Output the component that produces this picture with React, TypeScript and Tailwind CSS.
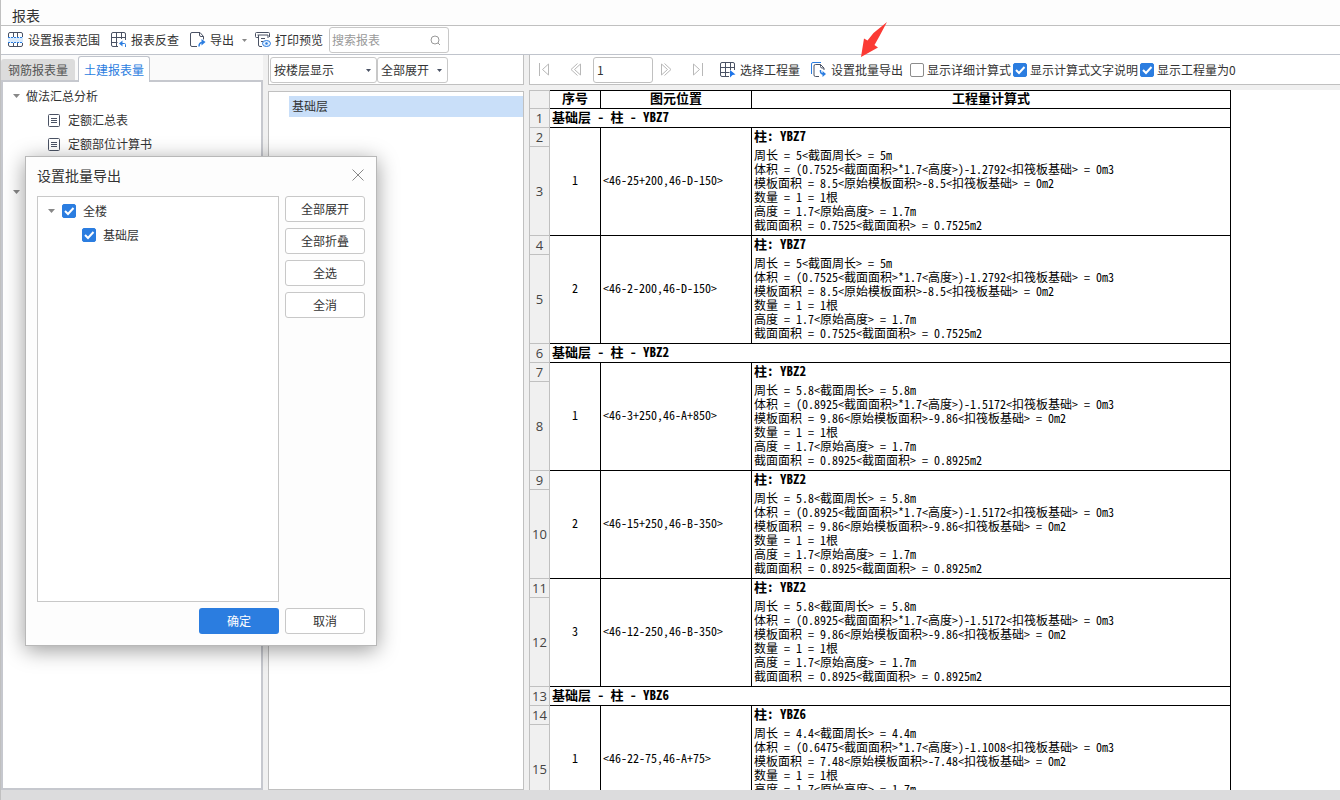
import { useState } from 'react'
import type { ReactNode } from 'react'

type Item = { seq: number; name: string; pos: string; lines: string[] }
type Group = { title: string; items: Item[] }

function makeItem(seq: number, name: string, pos: string, zc: string, a: string, v: string, mb: string): Item {
  return {
    seq,
    name,
    pos,
    lines: [
      `周长 = ${zc}<截面周长> = ${zc}m`,
      `体积 = (${a}<截面面积>*1.7<高度>)-${v}<扣筏板基础> = 0m3`,
      `模板面积 = ${mb}<原始模板面积>-${mb}<扣筏板基础> = 0m2`,
      '数量 = 1 = 1根',
      '高度 = 1.7<原始高度> = 1.7m',
      `截面面积 = ${a}<截面面积> = ${a}m2`,
    ],
  }
}

const groups: Group[] = [
  {
    title: '基础层 - 柱 - YBZ7',
    items: [
      makeItem(1, 'YBZ7', '<46-25+200,46-D-150>', '5', '0.7525', '1.2792', '8.5'),
      makeItem(2, 'YBZ7', '<46-2-200,46-D-150>', '5', '0.7525', '1.2792', '8.5'),
    ],
  },
  {
    title: '基础层 - 柱 - YBZ2',
    items: [
      makeItem(1, 'YBZ2', '<46-3+250,46-A+850>', '5.8', '0.8925', '1.5172', '9.86'),
      makeItem(2, 'YBZ2', '<46-15+250,46-B-350>', '5.8', '0.8925', '1.5172', '9.86'),
      makeItem(3, 'YBZ2', '<46-12-250,46-B-350>', '5.8', '0.8925', '1.5172', '9.86'),
    ],
  },
  {
    title: '基础层 - 柱 - YBZ6',
    items: [makeItem(1, 'YBZ6', '<46-22-75,46-A+75>', '4.4', '0.6475', '1.1008', '7.48')],
  },
]

function Caret({ className = 'text-[#888]' }: { className?: string }) {
  return (
    <svg width="7" height="4" viewBox="0 0 7 4" className={className}>
      <path d="M0 0h7L3.5 4z" fill="currentColor" />
    </svg>
  )
}

function Icon({ children }: { children: ReactNode }) {
  return (
    <svg width="16" height="16" viewBox="0 0 16 16" fill="none" stroke="#4a5264" className="shrink-0">
      {children}
    </svg>
  )
}

function RangeIcon() {
  return (
    <Icon>
      <rect x="0" y="5" width="15" height="6" fill="#d9ebfd" stroke="none" />
      <path d="M.5 5V2Q.5.5 2 .5h11q1.5 0 1.5 1.5v3M.5 11v2q0 1.500 1.500 1.500h11q1.500 0 1.500-1.500v-2M5.500.5V5M9.500.5V5M5.500 11v3.500M9.500 11v3.500" />
      <path d="M0 5.500h15M0 10.500h15" stroke="#2b7de0" strokeDasharray="2 1" />
    </Icon>
  )
}

function BackCheckIcon() {
  return (
    <Icon>
      <path d="M14.500 8V2Q14.500.5 13 .5H2Q.5.5.5 2v11q0 1.500 1.500 1.500h5M5.500.5v14M10.500.5V7M.5 5.500h14M.5 10.500h6" />
      <path d="M14.500 15v-2.500q0-1-1-1H11" stroke="#2b7de0" />
      <path d="M11.500 8.500v6L8 11.500z" fill="#2b7de0" stroke="none" />
    </Icon>
  )
}

function ExportIcon() {
  return (
    <Icon>
      <path d="M7 14.500H2Q.5 14.500.5 13V2Q.5.500 2 .5h8l3.500 4v3M9.500.5V3q0 1.500 1.500 1.500h2.500" />
      <path d="M9 14.500q0-4 3.500-4" stroke="#2b7de0" strokeWidth="1.500" />
      <path d="M11.500 7v6.500l4-3.500z" fill="#2b7de0" stroke="none" />
    </Icon>
  )
}

function PreviewIcon() {
  return (
    <Icon>
      <path d="M3.500 5.500H1.500q-1 0-1-1v-3q0-1 1-1h12q1 0 1 1V5M2.500 3h10.500v3M3.500 3v10q0 1.500 1.500 1.500h2M6 6.500h4M6 9.500h2" />
      <ellipse cx="11.500" cy="11.500" rx="4" ry="3" stroke="#2b7de0" fill="#e5f1fe" />
      <circle cx="11.500" cy="11.500" r="1.200" fill="#2b7de0" stroke="none" />
    </Icon>
  )
}

function SelectGridIcon() {
  return (
    <Icon>
      <path d="M14.500 8V2Q14.500.5 13 .5H2Q.5.5.5 2v11q0 1.500 1.500 1.500h7M5.500.5v14M10.500.5V8M.5 5.500h14M.5 10.500h9" />
      <path d="M10 8l5.500 4.500-3 .5-2.500 2.500z" fill="#1e74e8" stroke="none" />
    </Icon>
  )
}

function BatchIcon() {
  return (
    <Icon>
      <path d="M.5 12V2Q.5.5 2 .5h8" stroke="#2b7de0" />
      <path d="M8 14.500H4.500Q3 14.500 3 13V4q0-1.500 1.500-1.500h5L13 6v2M9.500 2.500V4.500q0 1.500 1.500 1.500h2" />
      <path d="M9.500 8q-.5 4 3 4" stroke="#2b7de0" strokeWidth="1.500" />
      <path d="M11.500 9v6l3.500-3z" fill="#2b7de0" stroke="none" />
    </Icon>
  )
}

function DocIcon() {
  return (
    <svg width="12" height="13" viewBox="0 0 12 13" fill="none" stroke="#4a5264">
      <rect x=".5" y=".5" width="11" height="12" rx="1" />
      <path d="M3 4.500h6M3 6.500h6M3 8.500h6" />
    </svg>
  )
}

function NavIcon({ d, label }: { d: string; label: string }) {
  return (
    <button aria-label={label} className="w-3 shrink-0">
      <svg width="12" height="13" viewBox="0 0 12 13" fill="none" stroke="#b8b8b8">
        <path d={d} />
      </svg>
    </button>
  )
}

function ToolButton({ icon, children }: { icon: ReactNode; children: ReactNode }) {
  return (
    <button className="relative flex shrink-0 items-center gap-1 whitespace-nowrap">
      {icon}
      {children}
    </button>
  )
}

function Check({ label, on, gap = 'gap-[3px]' }: { label: string; on: boolean; gap?: string }) {
  const [checked, setChecked] = useState(on)
  return (
    <label className={`flex shrink-0 items-center whitespace-nowrap ${gap}`}>
      <span className="relative block size-3.5">
        <input
          type="checkbox"
          checked={checked}
          onChange={(e) => setChecked(e.target.checked)}
          className="block size-3.5 appearance-none rounded-[2px] border border-[#8c8c8c] bg-white checked:border-[#2b7de0] checked:bg-[#2b7de0]"
        />
        {checked && (
          <svg viewBox="0 0 14 14" className="pointer-events-none absolute inset-0" fill="none" stroke="#fff" strokeWidth="2">
            <path d="M3 7l3 3 5.500-6" />
          </svg>
        )}
      </span>
      {label}
    </label>
  )
}

function Picker({ label, value, className }: { label: string; value: string; className: string }) {
  return (
    <div className={`relative ${className}`}>
      <select aria-label={label} className="h-[26px] w-full appearance-none rounded-[3px] border border-[#c8c8c8] bg-white pl-[3px] pr-4">
        <option>{value}</option>
      </select>
      <svg width="5" height="3" viewBox="0 0 5 3" className="pointer-events-none absolute right-1.5 top-3">
        <path d="M0 0h5L2.500 3z" fill="#4a5264" />
      </svg>
    </div>
  )
}

function NumCell({ n, tall = false }: { n?: number; tall?: boolean }) {
  return (
    <th
      scope="row"
      className={`border-b border-l border-r border-[#c0c0c0] bg-[#f0f0f0] p-0 text-center font-['Open_Sans',sans-serif] text-[13px] leading-[18px] font-normal text-[#444] ${tall ? 'h-[89px]' : 'h-[19px]'}`}
    >
      {n}
    </th>
  )
}

function ReportTable() {
  let n = 0
  return (
    <table className="w-[702px] table-fixed border-separate border-spacing-0 font-['Noto_Sans_Mono_CJK_SC','Noto_Sans_CJK_SC',monospace] text-xs leading-[14px] text-black">
      <colgroup>
        <col className="w-[21px]" />
        <col className="w-[51px]" />
        <col className="w-[151px]" />
        <col />
      </colgroup>
      <thead>
        <tr className="h-[19px] text-[13px] leading-[14px]">
          <td className="border border-[#c0c0c0] bg-[#f0f0f0] p-0" />
          <th className="border-y border-r border-black p-0 pb-[3px]">序号</th>
          <th className="border-y border-r border-black p-0 pb-[3px]">图元位置</th>
          <th className="border-y border-r border-black p-0 pb-[3px]">工程量计算式</th>
        </tr>
      </thead>
      {groups.map((g) => (
        <tbody key={g.title}>
          <tr>
            <NumCell n={++n} />
            <th colSpan={3} className="border-b border-r border-black p-0 pb-[3px] pl-0.5 text-left text-[13px] leading-[14px]">
              {g.title}
            </th>
          </tr>
          {g.items.map((it) => [
            <tr key={`${it.seq}-t`}>
              <NumCell n={++n} />
              <td rowSpan={2} className="border-b border-r border-black p-0 pb-1 text-center">{it.seq}</td>
              <td rowSpan={2} className="border-b border-r border-black p-0 pb-1 pl-0.5">{it.pos}</td>
              <th className="border-r border-black p-0 pb-[3px] pl-0.5 text-left text-[13px] leading-[14px]">柱: {it.name}</th>
            </tr>,
            <tr key={`${it.seq}-b`}>
              <NumCell n={++n} tall />
              <td className="border-b border-r border-black p-0 pb-[3px] pl-0.5">
                {it.lines.map((l) => (
                  <div key={l} className="whitespace-nowrap">{l}</div>
                ))}
              </td>
            </tr>,
          ])}
        </tbody>
      ))}
    </table>
  )
}

function BatchExportDialog() {
  const side = 'h-[26px] w-20 rounded-[3px] border border-[#c8c8c8] bg-white'
  return (
    <div
      role="dialog"
      aria-label="设置批量导出"
      className="absolute left-6 top-[156px] z-20 w-[352px] border border-[#b8b8b8] bg-[#fdfdfd] px-[11px] pb-[11px] shadow-[0_4px_20px_rgba(0,0,0,0.4)]"
    >
      <div className="flex h-[39px] items-center justify-between pb-[3px]">
        <h2 className="text-sm">设置批量导出</h2>
        <button aria-label="关闭" className="mr-px">
          <svg width="12" height="12" viewBox="0 0 12 12" stroke="#888" fill="none">
            <path d="M.5.5l11 11M11.500.5l-11 11" />
          </svg>
        </button>
      </div>
      <div className="flex justify-between">
        <div className="h-[406px] w-[242px] border border-[#c8c8c8] bg-white pt-0.5">
          <div className="flex h-6 items-center gap-[7px] pl-2.5">
            <Caret />
            <Check label="全楼" on gap="gap-[7px]" />
          </div>
          <div className="flex h-6 items-center pl-11">
            <Check label="基础层" on gap="gap-[7px]" />
          </div>
        </div>
        <div className="flex flex-col gap-1.5">
          <button className={side}>全部展开</button>
          <button className={side}>全部折叠</button>
          <button className={side}>全选</button>
          <button className={side}>全消</button>
        </div>
      </div>
      <div className="mt-1.5 flex justify-end gap-1.5">
        <button className="h-[26px] w-20 rounded-[3px] bg-[#2b7de0] text-white">确定</button>
        <button className={side}>取消</button>
      </div>
    </div>
  )
}

export default function App() {
  const [page, setPage] = useState('1')
  const [search, setSearch] = useState('')

  return (
    <div className="relative flex h-screen flex-col overflow-hidden border-l border-[#c0c0c0] bg-[#f0f0f0] font-['Noto_Sans_CJK_SC',sans-serif] text-xs text-[#333]">
      <header className="flex h-[26px] shrink-0 items-end border-b border-[#c0c0c0] bg-[#fdfdfd] pl-[11px]">
        <h1 className="text-sm leading-5">报表</h1>
      </header>

      <div className="flex h-[29px] shrink-0 items-center border-b border-[#c0c4cc] bg-white pl-[7px]">
        <div className="flex items-center gap-[11px]">
          <ToolButton icon={<RangeIcon />}>设置报表范围</ToolButton>
          <ToolButton icon={<BackCheckIcon />}>报表反查</ToolButton>
          <div className="flex items-center gap-2">
            <ToolButton icon={<ExportIcon />}>
              导出
              <svg width="5" height="3" viewBox="0 0 5 3" className="ml-1">
                <path d="M0 0h5L2.500 3z" fill="#888" />
              </svg>
            </ToolButton>
            <ToolButton icon={<PreviewIcon />}>打印预览</ToolButton>
          </div>
        </div>
        <label className="ml-1.5 flex h-[26px] w-[120px] items-center rounded-[3px] border border-[#c8c8c8] bg-white pl-0.5 pr-[7px]">
          <input
            value={search}
            onChange={(e) => setSearch(e.target.value)}
            placeholder="搜索报表"
            aria-label="搜索报表"
            className="min-w-0 flex-1 outline-none placeholder:text-[#999]"
          />
          <svg width="11" height="11" viewBox="0 0 11 11" fill="none" stroke="#999">
            <circle cx="5" cy="5" r="4" />
            <path d="M8 8l2 2" />
          </svg>
        </label>
      </div>

      <div className="flex min-h-0 flex-1">
        <aside className="flex w-[262px] shrink-0 flex-col bg-[#fafafa]">
          <div className="flex h-[27px] shrink-0 items-end gap-[3px]">
            <button className="mb-0.5 h-[21px] w-[74px] rounded-t-[3px] bg-[#dcdcdc] text-[#555]">钢筋报表量</button>
            <button className="z-10 h-[26px] w-[72px] rounded-t-[3px] border border-b-0 border-[#c0c4cc] bg-white text-[#2b7de0]">土建报表量</button>
          </div>
          <div className="-mt-0.5 flex-1 border-2 border-[#c6c8ce] bg-white pt-0.5">
            <div className="flex h-6 items-center gap-1.5 pl-2.5">
              <Caret />
              做法汇总分析
            </div>
            <div className="flex h-6 items-center gap-2 pl-[45px]">
              <DocIcon />
              定额汇总表
            </div>
            <div className="flex h-6 items-center gap-2 pl-[45px]">
              <DocIcon />
              定额部位计算书
            </div>
            <div className="mt-6 flex h-6 items-center pl-2.5">
              <Caret />
            </div>
          </div>
        </aside>

        <section className="ml-[5px] flex w-64 shrink-0 flex-col">
          <div className="flex h-[30px] items-center border border-t-0 border-[#c0c0c0] bg-white pl-px">
            <Picker label="显示方式" value="按楼层显示" className="w-[107px]" />
            <Picker label="展开方式" value="全部展开" className="w-[71px]" />
          </div>
          <div className="mt-1.5 flex-1 border border-[#c0c0c0] bg-white pt-1">
            <div className="ml-5 h-[21px] bg-[#c9dff9] pl-[3px] leading-5">基础层</div>
          </div>
        </section>

        <main className="ml-[5px] flex min-w-0 flex-1 flex-col">
          <div className="flex h-[30px] shrink-0 items-center border-b border-l border-[#c0c0c0] bg-white pl-2">
            <div className="flex items-center gap-5">
              <NavIcon label="首页" d="M1.500 0v13M10.500 1v11L4.500 6.500z" />
              <NavIcon label="上一页" d="M10.500 1v11L4.500 6.500zM7.500.5L1 6.500l6.500 6" />
            </div>
            <input
              value={page}
              onChange={(e) => setPage(e.target.value)}
              aria-label="页码"
              className="ml-[11px] h-[26px] w-[60px] rounded-[3px] border border-[#c0c0c0] bg-white pl-[3px] outline-none"
            />
            <div className="ml-[7px] flex items-center gap-5">
              <NavIcon label="下一页" d="M1.500 1v11L7.500 6.500zM4.500.5l6.500 6-6.500 6" />
              <NavIcon label="末页" d="M10.500 0v13M1.500 1v11L7.500 6.500z" />
            </div>
            <div className="ml-4 flex items-center gap-[11px]">
              <ToolButton icon={<SelectGridIcon />}>选择工程量</ToolButton>
              <ToolButton icon={<BatchIcon />}>
                设置批量导出
                <svg width="27" height="36" viewBox="0 0 27 36" className="pointer-events-none absolute -top-10 left-[50px] z-10">
                  <path d="M26 0L12.500 11 6.500 18.500 3 16.500 0 35l17-9.500-3.500-2.500L18 15z" fill="#fb3a34" />
                </svg>
              </ToolButton>
            </div>
            <div className="ml-[7px] flex items-center gap-0.5">
              <Check label="显示详细计算式" on={false} />
              <Check label="显示计算式文字说明" on />
              <Check label="显示工程量为0" on />
            </div>
          </div>
          <div className="mt-[5px] min-h-0 flex-1 overflow-hidden bg-white">
            <ReportTable />
          </div>
        </main>
      </div>

      <footer className="h-2.5 shrink-0 bg-[#dcdcdd]" />
      <BatchExportDialog />
    </div>
  )
}
